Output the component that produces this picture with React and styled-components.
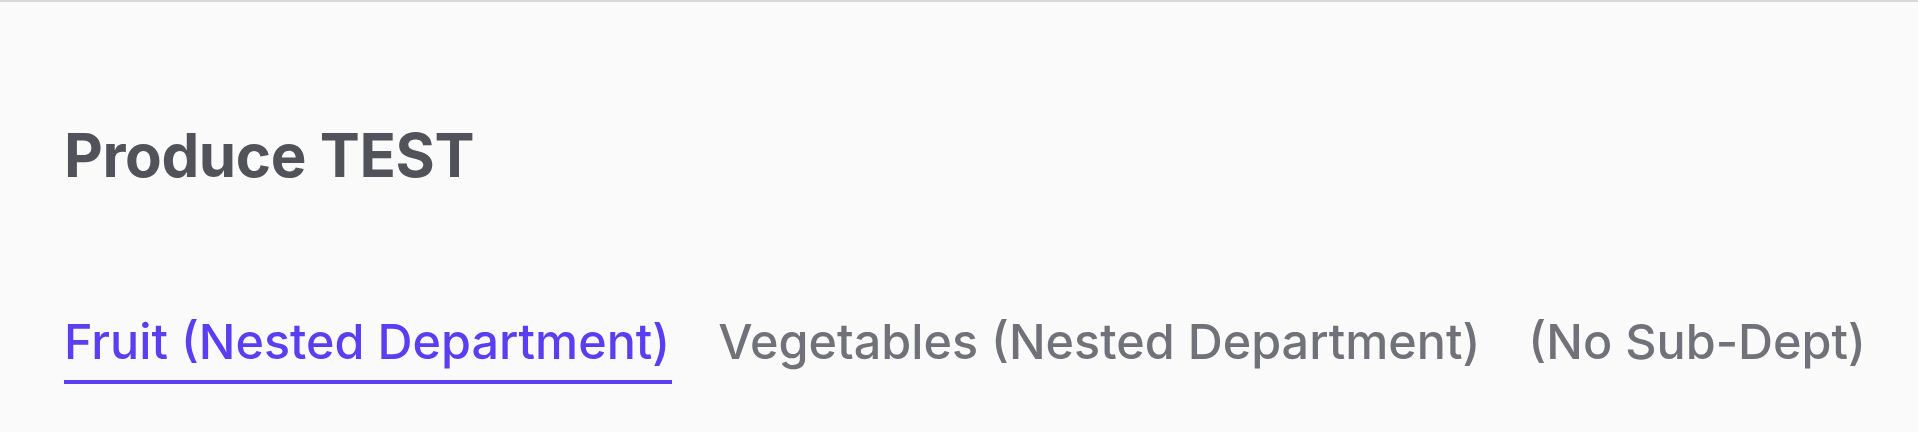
import { useState } from "react";
import styled, { createGlobalStyle } from "styled-components";

const GlobalStyle = createGlobalStyle`
  html, body {
    margin: 0;
    padding: 0;
    background: #fafafa;
  }
  body {
    font-family: Inter, "Noto Sans", sans-serif;
  }
`;

const Page = styled.div`
  width: 100%;
  height: 432px;
  box-sizing: border-box;
  border-top: 2px solid #d9d9dc;
  background: #fafafa;
  padding: 123px 64px 0 64px;
  display: flex;
  flex-direction: column;
`;

const Title = styled.h1`
  margin: 0;
  font-size: 60px;
  line-height: 60px;
  font-weight: 700;
  color: #52525b;
  letter-spacing: -0.4px;
`;

const TabBar = styled.nav`
  display: flex;
  align-items: flex-end;
  gap: 46px;
  margin-top: 133px;
`;

const Tab = styled.button`
  border: 0;
  background: none;
  padding: 0 2px 14px 0;
  margin: 0;
  font-family: inherit;
  font-size: 48.5px;
  line-height: 48px;
  font-weight: 500;
  color: ${(p) => (p.$active ? "#5b3ef2" : "#71717a")};
  border-bottom: 4px solid ${(p) => (p.$active ? "#5b3ef2" : "transparent")};
  cursor: pointer;
  white-space: nowrap;
`;

const tabs = [
  "Fruit (Nested Department)",
  "Vegetables (Nested Department)",
  "(No Sub-Dept)",
];

const App = () => {
  const [active, setActive] = useState(0);

  return (
    <>
      <GlobalStyle />
      <Page>
        <Title>Produce TEST</Title>
        <TabBar>
          {tabs.map((t, i) => (
            <Tab key={t} $active={i === active} onClick={() => setActive(i)}>
              {t}
            </Tab>
          ))}
        </TabBar>
      </Page>
    </>
  );
};

export default App;
